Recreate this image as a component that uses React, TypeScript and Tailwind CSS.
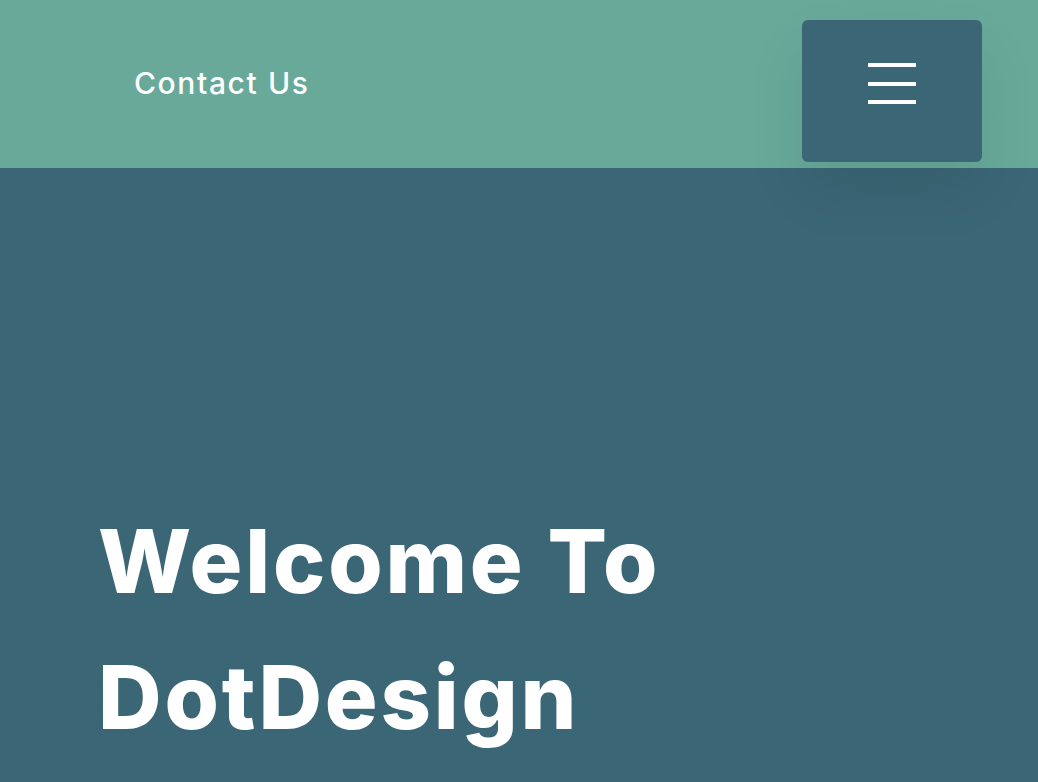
export default function App() {
  return (
    <div className="min-h-[782px] w-full bg-[#3b6676] font-['Inter','Noto_Sans',sans-serif] text-white">
      <header className="flex h-[168px] items-start justify-between bg-[#68a999] pl-[134px] pr-[56px]">
        <a href="#" className="mt-[63px] text-[30px] font-medium leading-[40px] tracking-[1.6px]">
          Contact Us
        </a>
        <button
          type="button"
          aria-label="Open menu"
          className="relative z-10 mt-[20px] flex h-[142px] w-[180px] flex-col items-center gap-[14.5px] rounded-[6px] bg-[#3b6676] pt-[43px] shadow-[0_28px_60px_rgba(0,0,0,0.08)]"
        >
          <span className="block h-[4px] w-[48px] bg-white" />
          <span className="block h-[4px] w-[48px] bg-white" />
          <span className="block h-[4px] w-[48px] bg-white" />
        </button>
      </header>
      <main className="pl-[98px] pt-[325px]">
        <h1 className="text-[88px] font-extrabold leading-[136px] tracking-[2.8px]">
          Welcome To
          <br />
          DotDesign
        </h1>
      </main>
    </div>
  );
}
